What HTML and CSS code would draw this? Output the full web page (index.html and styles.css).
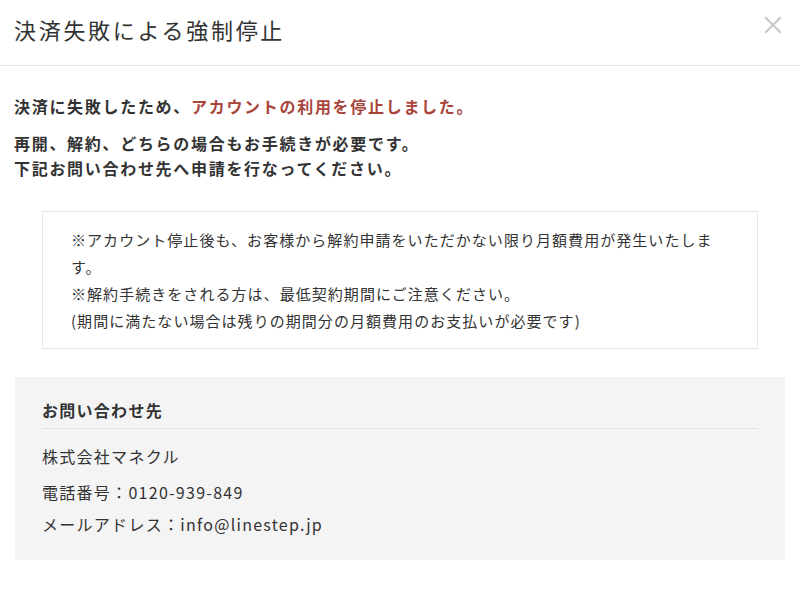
FILE: index.html
```html
<!DOCTYPE html>
<html lang="ja">
<head>
<meta charset="utf-8">
<title>決済失敗による強制停止</title>
<link rel="stylesheet" href="styles.css">
</head>
<body>
<div class="modal">
  <header class="modal-header">
    <h1 class="modal-title">決済失敗による強制停止</h1>
    <button class="close" aria-label="閉じる">
      <svg width="18" height="18" viewBox="0 0 18 18"><path d="M2 2L16 16M16 2L2 16" stroke="#c9c9c9" stroke-width="2.2" stroke-linecap="square" fill="none"/></svg>
    </button>
  </header>
  <div class="modal-body">
    <p class="lead">決済に失敗したため、<span class="alert">アカウントの利用を停止しました。</span></p>
    <p class="lead lead-second">再開、解約、どちらの場合もお手続きが必要です。<br>下記お問い合わせ先へ申請を行なってください。</p>
    <div class="notice">
      <p>※アカウント停止後も、お客様から解約申請をいただかない限り月額費用が発生いたします。</p>
      <p>※解約手続きをされる方は、最低契約期間にご注意ください。</p>
      <p>(期間に満たない場合は残りの期間分の月額費用のお支払いが必要です)</p>
    </div>
    <section class="contact">
      <h2 class="contact-title">お問い合わせ先</h2>
      <p class="company">株式会社マネクル</p>
      <p class="contact-lines">電話番号：0120-939-849<br>メールアドレス：info@linestep.jp</p>
    </section>
  </div>
</div>
</body>
</html>
```
FILE: styles.css
```css
* { box-sizing: border-box; }
html, body { margin: 0; padding: 0; background: #fff; }
body {
  font-family: "Noto Sans CJK JP", "Noto Sans", sans-serif;
  color: #333;
  width: 800px;
  height: 593px;
  overflow: hidden;
}
p { margin: 0; }
.modal-header {
  display: flex;
  align-items: flex-start;
  justify-content: space-between;
  height: 66px;
  padding: 13px 18px 0 14px;
  border-bottom: 1px solid #e3e3e3;
}
.modal-title {
  margin: 0;
  font-size: 22px;
  line-height: 32px;
  font-weight: 400;
  letter-spacing: 2.7px;
  color: #333;
}
.close {
  border: 0;
  background: none;
  padding: 0;
  margin-top: 3px;
  width: 18px;
  height: 18px;
  display: flex;
}
.modal-body {
  padding: 28px 15px 0 14px;
}
.lead {
  font-size: 16px;
  line-height: 25px;
  font-weight: 700;
  letter-spacing: 1.7px;
  color: #333;
}
.lead-second { margin-top: 12px; }
.alert { color: #a8453d; }
.notice {
  margin: 30px 27px 0 28px;
  border: 1px solid #e6e6e6;
  padding: 14px 28px 14px 28px;
  font-size: 15px;
  line-height: 27px;
  letter-spacing: 0.07em;
  color: #333;
  height: 138px;
}
.contact {
  margin-top: 28px;
  margin-left: 1px;
  background: #f4f4f4;
  padding: 21px 27px 19px;
  height: 183px;
}
.contact-title {
  margin: 0;
  font-size: 16px;
  line-height: 24px;
  font-weight: 700;
  letter-spacing: 0.08em;
  padding-bottom: 6px;
  border-bottom: 1px solid #e2e2e2;
}
.company, .contact-lines {
  font-size: 16px;
  line-height: 32px;
  letter-spacing: 0.08em;
}
.company { margin-top: 11px; }
.contact-lines { margin-top: 4px; }
```
